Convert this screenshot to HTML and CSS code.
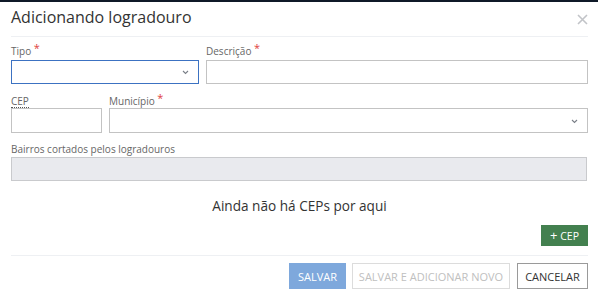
FILE: index.html
```html
<!DOCTYPE html>
<html lang="pt">
<head>
<meta charset="utf-8">
<link rel="stylesheet" href="styles.css">
</head>
<body>
<div class="modal">
  <div class="modal-header">
    <h1 class="title">Adicionando logradouro</h1>
    <button class="close" aria-label="Fechar">
      <svg width="11" height="11" viewBox="0 0 11 11"><path d="M1 1L10 10M10 1L1 10" stroke="#c2c4c8" stroke-width="1.6" fill="none"/></svg>
    </button>
  </div>
  <div class="modal-body">
    <div class="row row-1">
      <div class="field f-tipo">
        <label class="lbl">Tipo <span class="req">*</span></label>
        <div class="input select focused">
          <svg class="chev" width="7" height="5" viewBox="0 0 7 5"><path d="M1 1L3.5 3.5L6 1" stroke="#7a7f88" stroke-width="1.1" fill="none"/></svg>
        </div>
      </div>
      <div class="field f-desc">
        <label class="lbl">Descrição <span class="req">*</span></label>
        <div class="input"></div>
      </div>
    </div>
    <div class="row row-2">
      <div class="field f-cep">
        <label class="lbl"><span class="abbr">CEP</span></label>
        <div class="input tall"></div>
      </div>
      <div class="field f-mun">
        <label class="lbl">Município <span class="req">*</span></label>
        <div class="input select tall">
          <svg class="chev" width="7" height="5" viewBox="0 0 7 5"><path d="M1 1L3.5 3.5L6 1" stroke="#7a7f88" stroke-width="1.1" fill="none"/></svg>
        </div>
      </div>
    </div>
    <div class="row row-3">
      <div class="field f-full">
        <label class="lbl">Bairros cortados pelos logradouros</label>
        <div class="input disabled"></div>
      </div>
    </div>
    <p class="empty">Ainda não há CEPs por aqui</p>
    <div class="add-row">
      <button class="btn-add"><span class="plus">+</span> CEP</button>
    </div>
  </div>
  <div class="modal-footer">
    <button class="btn btn-primary">SALVAR</button>
    <button class="btn btn-disabled">SALVAR E ADICIONAR NOVO</button>
    <button class="btn btn-default">CANCELAR</button>
  </div>
</div>
</body>
</html>
```
FILE: styles.css
```css
html, body {
  margin: 0;
  padding: 0;
}
body {
  background: #0f1928;
  font-family: "Open Sans", "Noto Sans", sans-serif;
  color: #333;
  overflow: hidden;
}
.modal {
  margin-top: 2px;
  background: #fff;
  height: 295px;
  padding: 0 10px 0 11px;
  box-sizing: border-box;
}
.modal-header {
  height: 34px;
  border-bottom: 1px solid #eef0f3;
  display: flex;
  align-items: flex-start;
  justify-content: space-between;
}
.title {
  margin: 5px 0 0 0;
  font-size: 16px;
  line-height: 20px;
  font-weight: 400;
  color: #333;
}
.close {
  border: 0;
  background: none;
  padding: 0;
  margin: 12px 0 0 0;
  width: 11px;
  height: 11px;
  display: flex;
}
.modal-body {
  display: flex;
  flex-direction: column;
}
.row {
  display: flex;
  gap: 7px;
}
.row-1 { margin-top: 7px; }
.row-2 { margin-top: 10px; }
.row-3 { margin-top: 9px; }
.field {
  display: flex;
  flex-direction: column;
}
.f-tipo { width: 188px; }
.f-desc { flex: 1; }
.f-cep { width: 91px; }
.f-mun { flex: 1; }
.f-full { flex: 1; margin-right: 1px; }
.lbl {
  font-size: 10px;
  line-height: 14px;
  color: #666;
  margin-bottom: 2px;
  white-space: nowrap;
}
.row-2 .lbl { margin-bottom: 0; }
.row-3 .lbl { margin-bottom: 1px; }
.req {
  color: #e0413d;
  font-size: 11px;
  position: relative;
  top: -3px;
}
.abbr {
  display: inline-block;
  line-height: 12px;
  border-bottom: 1px dotted #555;
  color: #666;
}
.input {
  height: 24px;
  border: 1px solid #c3c3c3;
  box-sizing: border-box;
  background: #fff;
  display: flex;
  align-items: center;
  justify-content: flex-end;
}
.input.tall { height: 25px; }
.input.focused { border-color: #3c72c2; }
.input.disabled {
  background: #e9eaee;
  border-color: #c9cacd;
}
.chev { margin-right: 9px; margin-top: 1px; }
.empty {
  margin: 15px 0 0 0;
  font-size: 13.6px;
  line-height: 20px;
  text-align: center;
  color: #333;
}
.add-row {
  display: flex;
  justify-content: flex-end;
  margin-top: 9px;
  padding-bottom: 9px;
}
.btn-add {
  width: 47px;
  height: 21px;
  border: 0;
  background: #43804f;
  color: #fff;
  font-family: "Open Sans", sans-serif;
  font-size: 10.5px;
  padding: 0;
}
.plus {
  font-size: 13px;
  line-height: 10px;
}
.modal-footer {
  border-top: 1px solid #eef0f3;
  padding-top: 7px;
  display: flex;
  justify-content: flex-end;
  gap: 6px;
}
.btn {
  height: 26px;
  box-sizing: border-box;
  font-family: "Open Sans", sans-serif;
  font-size: 11px;
  padding: 0;
  background: #fff;
}
.btn-primary {
  width: 57px;
  border: 0;
  background: #7ea8dc;
  color: #fff;
}
.btn-disabled {
  width: 158px;
  border: 1px solid #dcdcdc;
  color: #c0c0c0;
}
.btn-default {
  width: 71px;
  margin-left: 1px;
  border: 1px solid #9a9a9a;
  color: #333;
}
```
